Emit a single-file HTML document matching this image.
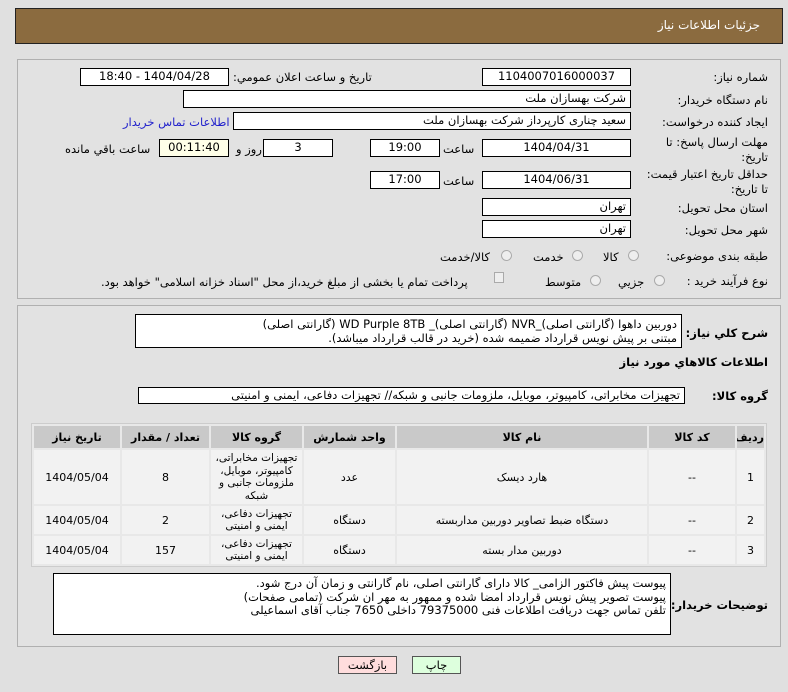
<!DOCTYPE html>
<html><head><meta charset="utf-8"><style>
*{margin:0;padding:0;box-sizing:border-box}
body{width:788px;height:692px;background:#e0e0e0;font-family:"DejaVu Sans","Liberation Sans",sans-serif;font-size:11.5px;color:#000;position:relative;overflow:hidden;direction:rtl}
.a{position:absolute;white-space:nowrap}
.box{position:absolute;background:#fff;border:1px solid #000;padding:0 4px;line-height:15px;font-size:11.5px;white-space:nowrap;overflow:hidden}
.c{text-align:center}
.hdr{position:absolute;left:15px;top:8px;width:768px;height:36px;background:#8b6b3f;border:1px solid #222}
.panel{position:absolute;border:1px solid #b0b0b0;background:#e2e2e2}
table{position:absolute;border-collapse:separate;border-spacing:2px;background:#e8e8e8;border:1px solid #ccc;table-layout:fixed}
td,th{text-align:center;font-size:11px;overflow:hidden;padding:0}
th{background:#c9c9c9;height:22px;font-weight:bold}
td{background:#f2f2f2}
.rad{position:absolute;width:11px;height:11px;border:1px solid #aaa;border-radius:50%;background:#eee}
.btn{position:absolute;height:18px;border:1px solid #555;text-align:center;line-height:16px;font-size:11.5px}
</style></head><body>
<div class="hdr"></div>
<div class="a" style="right:28px;top:18px;color:#fff;font-size:12px">جزئيات اطلاعات نياز</div>

<div class="panel" style="left:17px;top:59px;width:764px;height:240px"></div>
<div class="a" style="right:20px;top:70px">شماره نياز:</div>
<div class="box c" style="left:482px;top:68px;width:149px;height:18px">1104007016000037</div>
<div class="a" style="left:233px;top:70px">تاريخ و ساعت اعلان عمومي:</div>
<div class="box c" style="left:80px;top:68px;width:149px;height:18px">1404/04/28 - 18:40</div>

<div class="a" style="right:20px;top:93px">نام دستگاه خريدار:</div>
<div class="box" style="left:183px;top:90px;width:448px;height:18px">شرکت بهسازان ملت</div>

<div class="a" style="right:20px;top:115px">ايجاد کننده درخواست:</div>
<div class="box" style="left:233px;top:112px;width:398px;height:18px">سعید چناری کارپرداز شرکت بهسازان ملت</div>
<div class="a" style="left:123px;top:115px;color:#22c">اطلاعات تماس خريدار</div>

<div class="a" style="right:20px;top:135px">مهلت ارسال پاسخ: تا</div>
<div class="a" style="right:20px;top:150px">تاريخ:</div>
<div class="box c" style="left:482px;top:139px;width:149px;height:18px">1404/04/31</div>
<div class="a" style="left:443px;top:142px">ساعت</div>
<div class="box c" style="left:370px;top:139px;width:70px;height:18px">19:00</div>
<div class="box c" style="left:263px;top:139px;width:70px;height:18px">3</div>
<div class="a" style="left:236px;top:142px">روز و</div>
<div class="box c" style="left:159px;top:139px;width:70px;height:18px;background:#ffffe8">00:11:40</div>
<div class="a" style="left:65px;top:142px">ساعت باقي مانده</div>

<div class="a" style="right:20px;top:167px">حداقل تاريخ اعتبار قيمت:</div>
<div class="a" style="right:20px;top:182px">تا تاريخ:</div>
<div class="box c" style="left:482px;top:171px;width:149px;height:18px">1404/06/31</div>
<div class="a" style="left:443px;top:174px">ساعت</div>
<div class="box c" style="left:370px;top:171px;width:70px;height:18px">17:00</div>

<div class="a" style="right:20px;top:201px">استان محل تحويل:</div>
<div class="box" style="left:482px;top:198px;width:149px;height:18px">تهران</div>
<div class="a" style="right:20px;top:223px">شهر محل تحويل:</div>
<div class="box" style="left:482px;top:220px;width:149px;height:18px">تهران</div>

<div class="a" style="right:20px;top:249px">طبقه بندی موضوعی:</div>
<div class="rad" style="left:628px;top:250px"></div><div class="a" style="left:603px;top:250px">کالا</div>
<div class="rad" style="left:572px;top:250px"></div><div class="a" style="left:533px;top:250px">خدمت</div>
<div class="rad" style="left:501px;top:250px"></div><div class="a" style="left:440px;top:250px">کالا/خدمت</div>

<div class="a" style="right:20px;top:274px">نوع فرآيند خريد :</div>
<div class="rad" style="left:654px;top:275px"></div><div class="a" style="left:618px;top:275px">جزيي</div>
<div class="rad" style="left:590px;top:275px"></div><div class="a" style="left:545px;top:275px">متوسط</div>
<div class="a" style="left:494px;top:272px;width:10px;height:11px;border:1px solid #aaa;background:#eee"></div>
<div class="a" style="left:101px;top:275px">پرداخت تمام يا بخشی از مبلغ خريد،از محل "اسناد خزانه اسلامی" خواهد بود.</div>

<div class="panel" style="left:17px;top:305px;width:764px;height:342px"></div>
<div class="a" style="right:20px;top:326px;font-weight:bold">شرح کلي نياز:</div>
<div class="box" style="left:135px;top:314px;width:547px;height:34px;line-height:14px;padding-top:2px">دوربین داهوا (گارانتی اصلی)_NVR (گارانتی اصلی)_ WD Purple 8TB (گارانتی اصلی)<br>مبتنی بر پیش نویس قرارداد ضمیمه شده (خرید در قالب قرارداد میباشد).</div>
<div class="a" style="right:20px;top:355px;font-weight:bold">اطلاعات کالاهاي مورد نياز</div>
<div class="a" style="right:20px;top:389px;font-weight:bold">گروه کالا:</div>
<div class="box" style="left:138px;top:387px;width:547px;height:17px">تجهیزات مخابراتی، کامپیوتر، موبایل، ملزومات جانبی و شبکه// تجهیزات دفاعی، ایمنی و امنیتی</div>

<table style="left:31px;top:423px;width:736px;height:143px">
<colgroup><col style="width:27px"><col style="width:86px"><col style="width:250px"><col style="width:91px"><col style="width:91px"><col style="width:87px"><col></colgroup>
<tr><th>رديف</th><th>کد کالا</th><th>نام کالا</th><th>واحد شمارش</th><th>گروه کالا</th><th>تعداد / مقدار</th><th>تاريخ نياز</th></tr>
<tr style="height:54px"><td>1</td><td>--</td><td>هارد دیسک</td><td>عدد</td><td style="line-height:12.5px;font-size:10.5px">تجهیزات مخابراتی، کامپیوتر، موبایل، ملزومات جانبی و شبکه</td><td>8</td><td>1404/05/04</td></tr>
<tr style="height:28px"><td>2</td><td>--</td><td>دستگاه ضبط تصاویر دوربین مداربسته</td><td>دستگاه</td><td style="line-height:12.5px;font-size:10.5px">تجهیزات دفاعی، ایمنی و امنیتی</td><td>2</td><td>1404/05/04</td></tr>
<tr style="height:28px"><td>3</td><td>--</td><td>دوربین مدار بسته</td><td>دستگاه</td><td style="line-height:12.5px;font-size:10.5px">تجهیزات دفاعی، ایمنی و امنیتی</td><td>157</td><td>1404/05/04</td></tr>
</table>

<div class="a" style="right:20px;top:598px;font-weight:bold">توضيحات خريدار:</div>
<div class="box" style="left:53px;top:573px;width:618px;height:62px;line-height:13.5px;padding-top:3px">پیوست پیش فاکتور الزامی_ کالا دارای گارانتی اصلی، نام گارانتی و زمان آن درج شود.<br>پیوست تصویر پیش نویس قرارداد امضا شده و ممهور به مهر ان شرکت (تمامی صفحات)<br>تلفن تماس جهت دریافت اطلاعات فنی 79375000 داخلی 7650 جناب آقای اسماعیلی</div>

<div class="btn" style="left:338px;top:656px;width:59px;background:#fdd">بازگشت</div>
<div class="btn" style="left:412px;top:656px;width:49px;background:#dfd">چاپ</div>
</body></html>
